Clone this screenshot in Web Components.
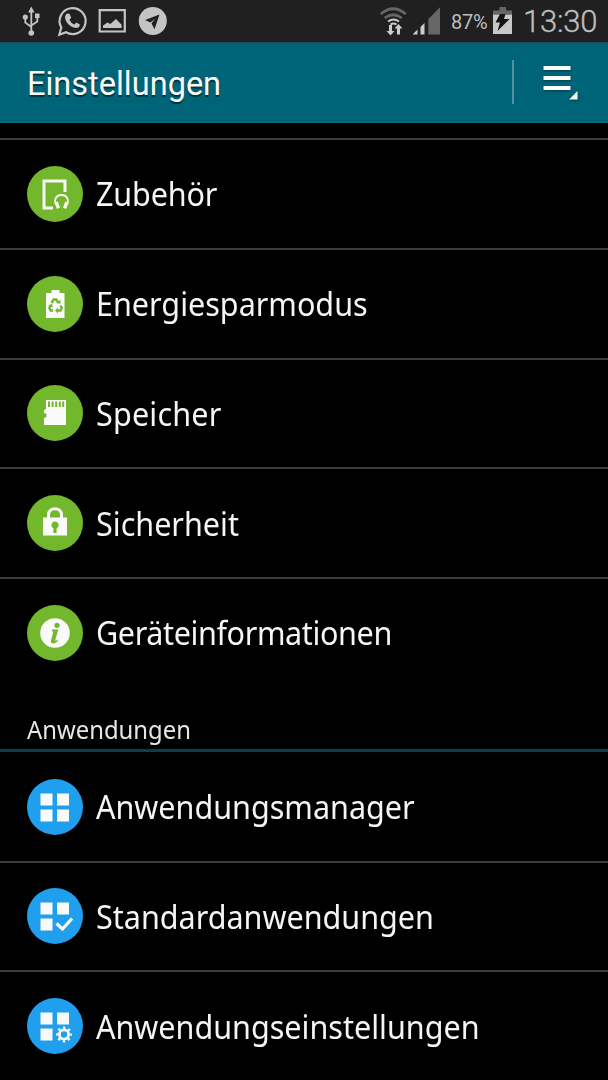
<!DOCTYPE html>
<html lang="de">
<head>
<meta charset="utf-8">
<title>Einstellungen</title>
<style>
  html, body {
    margin: 0;
    background: #000;
    height: 1080px;
    overflow: hidden;
  }
</style>
</head>
<body>
<settings-screen></settings-screen>

<script>
const GRID = `
  <path d="M13.5 14.5h12v12h-12zM30 14.5h12v12H30zM13.5 30.5h12v12h-12z"/>`;

const ICONS = {
  accessory: `
    <path d="M26 42H17V15h21v11" fill="none" stroke="#fafafa" stroke-width="3"/>
    <path d="M30.500 40c-5-5-1.500-11 4-11s9 6 4 11" fill="none" stroke="#fafafa" stroke-width="1.800"/>
    <path d="M27.500 36.500l3.200-1 2.300 6-3 1.500zM41.500 36.500l-3.200-1-2.300 6 3 1.500z"/>`,
  battery: `
    <path d="M24.500 14h8v3h5v25H19V17h5.500z"/>
    <g fill="none" stroke="#73b72c" stroke-width="2.400">
      <path d="M24.500 27l2.200-3.500h2.500l2 3"/>
      <path d="M33.500 29.500l1.300 2.500-1.300 2.500h-3.500"/>
      <path d="M26 34.500h-2.300L22.300 32l1.700-3"/>
    </g>
    <path fill="#73b72c" d="M29.500 27.500h4V23.500zM31 31.500v6l-3-3zM21 29.500l4-1.500 1 3.500z"/>`,
  storage: `
    <path fill-rule="evenodd" d="M19 15h20v25H17v-7l2.500-1v-3L17 28v-3l2-1zM21 16.500V22h2v-5.500zm3.600 0V22h2v-5.500zm3.600 0V22h2v-5.500zm3.600 0V22h2v-5.500zm3.400 0V22h2v-5.500z"/>`,
  lock: `
    <path d="M21.500 24v-4c0-8.500 13-8.500 13 0v4" fill="none" stroke="#fafafa" stroke-width="3"/>
    <path d="M16 22.500h24v18H16z"/>
    <path fill="#73b72c" d="M28 26.500a3.600 3.600 0 0 1 1.600 6.800V38h-3.200v-4.700a3.600 3.600 0 0 1 1.600-6.800z"/>`,
  info: `
    <circle cx="28" cy="28" r="14.800"/>
    <circle cx="30" cy="20.300" r="2.600" fill="#73b72c"/>
    <path fill="#73b72c" d="M25 24.500h6.300l-3 10.500c-.3 1 .7 1 2.200-.5l.5 1c-2.500 4-8 4-7 0l2.400-9H25z"/>`,
  apps: `${GRID}<path d="M30 30.500h12v12H30z"/>`,
  defaults: `${GRID}<path d="M29.500 35.500l6 5.500 9.500-10.500" fill="none" stroke="#fafafa" stroke-width="3.200"/>`,
  appsettings: `${GRID}
    <circle cx="37" cy="36.500" r="4.600" fill="none" stroke="#fafafa" stroke-width="2.800"/>
    <circle cx="37" cy="36.500" r="6.700" fill="none" stroke="#fafafa" stroke-width="2.600" stroke-dasharray="2.300 2.962" stroke-dashoffset="1.150"/>`
};

class StatusBar extends HTMLElement {
  connectedCallback() {
    this.attachShadow({ mode: 'open' });
    this.shadowRoot.innerHTML = `
      <style>
        :host {
          display: flex;
          justify-content: space-between;
          height: 42px;
          background: #202020;
          color: #bebebe;
          font-family: Roboto, "Liberation Sans", sans-serif;
        }
        .group {
          display: flex;
          align-items: center;
        }
        svg { display: block; }
        .percent {
          font-size: 20px;
          line-height: 24px;
          width: 40px;
          margin: 2px 0 0 3px;
          letter-spacing: -0.2px;
          white-space: nowrap;
        }
        .clock {
          font-size: 31px;
          line-height: 42px;
          font-weight: 300;
          -webkit-text-stroke: 0.35px #bebebe;
          letter-spacing: -0.2px;
          width: 85px;
          margin-left: 2px;
          padding-top: 1px;
          white-space: nowrap;
        }
      </style>
      <div class="group">
        <svg width="180" height="42" fill="#c4c4c4">
          <g fill="none" stroke="#c4c4c4" stroke-width="1.800">
            <path d="M31.300 11v22M25.300 18v4.500l6 4.500M37.300 17v4.500l-6 4"/>
          </g>
          <path d="M31.300 6.500l3.200 6h-6.400zM35 13.500h4.500V18H35z"/>
          <circle cx="25.300" cy="17" r="2.600"/>
          <circle cx="31.300" cy="33" r="2.800"/>
          <path d="M59.300 34.700l2-7.200a13 13 0 1 1 4.700 4.800z" fill="none" stroke="#c4c4c4" stroke-width="2.200"/>
          <path d="M67.300 13.500l2.200.3 1.700 4-1.700 2c1 2.300 2.700 3.800 4.900 4.800l1.900-2 3.500 2c.2 2-1.500 3.500-3.800 3.500-6-.6-10.500-6-11-10.500.1-2 1-3.500 2.300-4.100z"/>
          <path d="M99.700 10.200h25.100v21.300H99.700z" fill="none" stroke="#c4c4c4" stroke-width="2.200"/>
          <path d="M103 28v-2.500l4.500-3 2.800 1.600 5.700-5 5.600 5.600V28z"/>
          <circle cx="152.800" cy="21" r="14"/>
          <path fill="#202020" d="M145 20l14.500-5.500-5 14.800-3-5.800 3.300-4.500-4.500 3.500z"/>
        </svg>
      </div>
      <div class="group">
        <svg width="71" height="42" viewBox="377 0 71 42">
          <g fill="none" stroke="#666" stroke-width="2.700">
            <path d="M380.700 14q12.500-10.500 25 0M384.700 18q8.500-6.500 17 0"/>
          </g>
          <path d="M388 21.500q5.500-4 11 0M390.500 24.500q3-2 6 0" fill="none" stroke="#ccc" stroke-width="2"/>
          <path fill="#ccc" d="M389 25h3v6h2.500l-4 4.500-4-4.500h2.500zM397 34.500v-6h-2.500l4-4.500 4 4.500H400v6z"/>
          <path fill="#ccc" d="M413 34.500v-.5l4.500-4.500v5zM420.500 34.500V27l4-4v11.500z"/>
          <path fill="#666" d="M428.300 34.500V19L440 7.300v27.200z"/>
        </svg>
        <span class="percent">87%</span>
        <svg width="30" height="42" viewBox="491 0 30 42">
          <path fill="#666" d="M499.500 7h6.500v3.500h6v4h-19v-4h6.500z"/>
          <path fill="#c8c8c8" d="M493 14.500h19V34h-19z"/>
          <path fill="#151515" d="M500 14h5.500l-1.500 5h5.500L497.500 31l2.500-8.500h-4.500z"/>
        </svg>
        <span class="clock">13:30</span>
      </div>
    `;
  }
}
customElements.define('status-bar', StatusBar);

class ActionBar extends HTMLElement {
  connectedCallback() {
    this.attachShadow({ mode: 'open' });
    this.shadowRoot.innerHTML = `
      <style>
        :host {
          display: flex;
          align-items: center;
          justify-content: space-between;
          box-sizing: border-box;
          height: 81px;
          padding-left: 27px;
          background: #006478;
          border-top: 1px solid #12505c;
          border-bottom: 2px solid #0a6a7a;
          color: #fafafa;
          font: 32.5px/40px Roboto, "Liberation Sans", sans-serif;
          text-shadow: 0 2px 1px rgba(0, 0, 0, 0.5);
        }
        .title { padding-top: 3px; }
        .menu {
          display: flex;
          align-items: center;
          height: 44px;
          width: 94px;
          border-left: 2px solid #5192a0;
        }
        svg { display: block; filter: drop-shadow(0 1px 1px rgba(0, 0, 0, 0.4)); }
      </style>
      <div class="title"><slot></slot></div>
      <div class="menu">
        <svg width="70" height="44" fill="#fafafa">
          <path d="M29.500 6h27v4h-27zM29.500 16h27v4h-27zM29.500 26h27v4h-27zM63.500 31v8.500H55z"/>
        </svg>
      </div>
    `;
  }
}
customElements.define('action-bar', ActionBar);

class SettingsItem extends HTMLElement {
  connectedCallback() {
    const color = this.getAttribute('color') || '#73b72c';
    const spacing = this.getAttribute('spacing') || 0;
    this.attachShadow({ mode: 'open' });
    this.shadowRoot.innerHTML = `
      <style>
        :host {
          display: flex;
          align-items: center;
          box-sizing: border-box;
          height: 109.75px;
          padding-left: 27px;
          gap: 13px;
          border-top: 2px solid #3c3c3c;
          color: #f5f5f5;
          font: 32px/40px "Noto Sans", Roboto, sans-serif;
          white-space: nowrap;
        }
        :host([first]) { border-top-color: transparent; }
        .icon {
          flex: none;
          width: 56px;
          height: 56px;
          border-radius: 50%;
          background: ${color};
        }
        .label {
          padding-top: 1px;
          transform: scaleX(0.954);
          transform-origin: left;
          letter-spacing: ${spacing}px;
        }
        svg { display: block; }
      </style>
      <div class="icon">
        <svg width="56" height="56" fill="#fafafa">${ICONS[this.getAttribute('icon')]}</svg>
      </div>
      <div class="label"><slot></slot></div>
    `;
  }
}
customElements.define('settings-item', SettingsItem);

class SectionTitle extends HTMLElement {
  connectedCallback() {
    this.attachShadow({ mode: 'open' });
    this.shadowRoot.innerHTML = `
      <style>
        :host {
          display: flex;
          align-items: flex-end;
          box-sizing: border-box;
          height: 65px;
          padding: 0 27px 4px;
          border-bottom: 3px solid #04424f;
          color: #e6e6e6;
          font: 25px/32px "Noto Sans", Roboto, sans-serif;
        }
        .label {
          transform: scaleX(0.954);
          transform-origin: left;
        }
      </style>
      <div class="label"><slot></slot></div>
    `;
  }
}
customElements.define('section-title', SectionTitle);

class SettingsScreen extends HTMLElement {
  connectedCallback() {
    this.attachShadow({ mode: 'open' });
    this.shadowRoot.innerHTML = `
      <style>
        :host {
          display: block;
          width: 608px;
          height: 1080px;
          overflow: hidden;
          background: #000;
        }
        .list { padding-top: 15px; }
        .apps { margin-top: -1px; }
      </style>
      <status-bar></status-bar>
      <action-bar>Einstellungen</action-bar>
      <div class="list">
        <settings-item icon="accessory" spacing="-0.15">Zubehör</settings-item>
        <settings-item icon="battery">Energiesparmodus</settings-item>
        <settings-item icon="storage" spacing="0.2">Speicher</settings-item>
        <settings-item icon="lock">Sicherheit</settings-item>
        <settings-item icon="info" spacing="-0.4">Geräteinformationen</settings-item>
        <section-title>Anwendungen</section-title>
        <div class="apps">
          <settings-item first icon="apps" color="#209fee">Anwendungsmanager</settings-item>
          <settings-item icon="defaults" color="#209fee">Standardanwendungen</settings-item>
          <settings-item icon="appsettings" color="#209fee">Anwendungseinstellungen</settings-item>
        </div>
      </div>
    `;
  }
}
customElements.define('settings-screen', SettingsScreen);
</script>
</body>
</html>
